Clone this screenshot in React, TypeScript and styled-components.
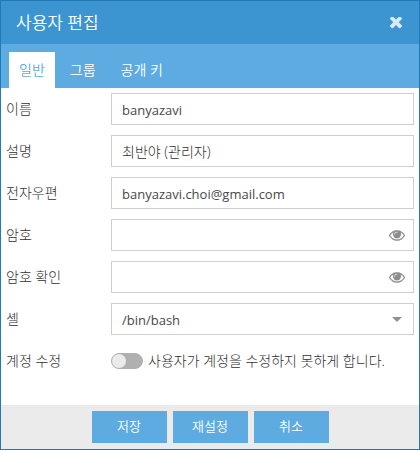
import React, { useState } from "react";
import styled, { createGlobalStyle } from "styled-components";

const GlobalStyle = createGlobalStyle`
  *, *::before, *::after { box-sizing: border-box; }
  body { margin: 0; background: #fff; }
  body, button, input, select {
    font-family: "Open Sans", "Noto Sans CJK KR", sans-serif;
    font-size: 14px;
  }
`;

const Dialog = styled.main`
  display: flex;
  flex-direction: column;
  min-height: 100vh;
  border: 1px solid #1e7ab8;
  background: #fff;
  color: #484848;
`;

const Header = styled.header`
  display: flex;
  align-items: center;
  justify-content: space-between;
  height: 43px;
  padding: 0 17px 0 15px;
  background: #3c95d0;
  color: #fff;
`;

const Title = styled.h1`
  margin: 0;
  font-size: 17px;
  font-weight: 350;
  line-height: 24px;
`;

const IconButton = styled.button`
  display: flex;
  padding: 0;
  border: 0;
  background: none;
  color: inherit;
  cursor: pointer;
`;

const CloseButton = styled(IconButton)`
  color: #d8eaf6;
`;

const Tabs = styled.div`
  display: flex;
  align-items: flex-end;
  gap: 5px;
  height: 44px;
  padding: 0 8px;
  background: #5dabe0;
`;

const Tab = styled.button<{ $active: boolean }>`
  height: 36px;
  padding: 0 10px;
  border: 0;
  background: ${(p) => (p.$active ? "#fff" : "transparent")};
  color: ${(p) => (p.$active ? "#5dabe0" : "#fff")};
  font-weight: 350;
  line-height: 20px;
  cursor: pointer;
`;

const Form = styled.form`
  display: flex;
  flex: 1;
  flex-direction: column;
`;

const Fields = styled.div`
  display: flex;
  flex: 1;
  flex-direction: column;
  gap: 10px;
  padding: 5px;
`;

const Row = styled.div`
  display: grid;
  grid-template-columns: 105px minmax(0, 1fr);
  align-items: center;
  height: 32px;
`;

const Label = styled.label`
  color: #303030;
  font-weight: 300;
  line-height: 20px;
`;

const Control = styled.div`
  display: flex;
  align-items: center;
  height: 32px;
  position: relative;
`;

const TextInput = styled.input<{ $icon?: boolean; $hangul?: boolean }>`
  width: 100%;
  height: 32px;
  padding: ${(p) => (p.$hangul ? "0" : "2px")} ${(p) => (p.$icon ? "32px" : "10px")} 0 10px;
  border: 1px solid #cfcfcf;
  border-radius: 0;
  background: #fff;
  color: ${(p) => (p.$hangul ? "#303030" : "#484848")};
  font-size: ${(p) => (p.$hangul ? "14px" : "13px")};
  font-weight: ${(p) => (p.$hangul ? 300 : 400)};
  outline: none;
`;

const Select = styled.select`
  width: 100%;
  height: 32px;
  padding: 2px 32px 0 10px;
  border: 1px solid #cfcfcf;
  border-radius: 0;
  appearance: none;
  background: #fff;
  color: #484848;
  font-size: 13px;
  outline: none;
`;

const RevealButton = styled(IconButton)`
  position: absolute;
  right: 9px;
  color: #8c8c8c;
`;

const Caret = styled.svg`
  position: absolute;
  right: 12px;
  color: #919191;
  pointer-events: none;
`;

const Switch = styled.input`
  appearance: none;
  display: flex;
  width: 32px;
  height: 16px;
  margin: 0 5px 0 0;
  border: 1px solid #b0b0b0;
  border-radius: 8px;
  background: #b0b0b0;
  cursor: pointer;

  &::before {
    content: "";
    width: 14px;
    height: 14px;
    border-radius: 50%;
    background: #ebebeb;
  }

  &:checked {
    justify-content: flex-end;
    border-color: #5dabe0;
    background: #5dabe0;
  }
`;

const Footer = styled.footer`
  display: flex;
  align-items: center;
  justify-content: center;
  gap: 6px;
  height: 44px;
  background: #ebebeb;
`;

const ActionButton = styled.button`
  width: 75px;
  height: 32px;
  padding: 0 0 4px;
  border: 0;
  background: #5dabe0;
  color: #fff;
  font-size: 13px;
  font-weight: 350;
  cursor: pointer;
`;

const CloseIcon = () => (
  <svg width="12" height="12" viewBox="302 434 1188 1188" fill="currentColor" aria-hidden="true">
    <path d="M1490 1322q0 40-28 68l-136 136q-28 28-68 28t-68-28l-294-294-294 294q-28 28-68 28t-68-28l-136-136q-28-28-28-68t28-68l294-294-294-294q-28-28-28-68t28-68l136-136q28-28 68-28t68 28l294 294 294-294q28-28 68-28t68 28l136 136q28 28 28 68t-28 68l-294 294 294 294q28 28 28 68z" />
  </svg>
);

const EyeIcon = () => (
  <svg
    width="16"
    height="11"
    viewBox="0 384 1792 1152"
    fill="currentColor"
    stroke="currentColor"
    strokeWidth="20"
    aria-hidden="true"
  >
    <path d="M1664 960q-152-236-381-353 61 104 61 225 0 185-131.5 316.5t-316.5 131.5-316.5-131.5-131.5-316.5q0-121 61-225-229 117-381 353 133 205 333.5 326.5t434.5 121.5 434.5-121.5 333.5-326.5zm-720-384q0-20-14-34t-34-14q-125 0-214.5 89.5t-89.5 214.5q0 20 14 34t34 14 34-14 14-34q0-86 61-147t147-61q20 0 34-14t14-34zm848 384q0 34-20 69-140 230-376.5 368.5t-499.5 138.5-499.5-139-376.5-368q-20-35-20-69t20-69q140-229 376.5-368t499.5-139 499.5 139 376.5 368q20 35 20 69z" />
  </svg>
);

function PasswordRow({ id, label }: { id: string; label: string }) {
  const [visible, setVisible] = useState(false);
  return (
    <Row>
      <Label htmlFor={id}>{label}</Label>
      <Control>
        <TextInput id={id} type={visible ? "text" : "password"} autoComplete="new-password" $icon />
        <RevealButton type="button" aria-label={label + " 표시"} onClick={() => setVisible(!visible)}>
          <EyeIcon />
        </RevealButton>
      </Control>
    </Row>
  );
}

type TextRowProps = { id: string; label: string; value: string; type?: string; hangul?: boolean };

function TextRow({ id, label, value, type = "text", hangul }: TextRowProps) {
  return (
    <Row>
      <Label htmlFor={id}>{label}</Label>
      <Control>
        <TextInput id={id} type={type} defaultValue={value} $hangul={hangul} />
      </Control>
    </Row>
  );
}

const TABS = ["일반", "그룹", "공개 키"];

export default function App() {
  const [tab, setTab] = useState(TABS[0]);
  return (
    <>
      <GlobalStyle />
      <Dialog>
        <Header>
          <Title>사용자 편집</Title>
          <CloseButton type="button" aria-label="닫기">
            <CloseIcon />
          </CloseButton>
        </Header>
        <Tabs role="tablist">
          {TABS.map((name) => (
            <Tab key={name} type="button" role="tab" aria-selected={tab === name} $active={tab === name} onClick={() => setTab(name)}>
              {name}
            </Tab>
          ))}
        </Tabs>
        <Form onSubmit={(e) => e.preventDefault()}>
          <Fields>
            <TextRow id="name" label="이름" value="banyazavi" />
            <TextRow id="comment" label="설명" value="최반야 (관리자)" hangul />
            <TextRow id="email" label="전자우편" value="banyazavi.choi@gmail.com" type="email" />
            <PasswordRow id="password" label="암호" />
            <PasswordRow id="confirm" label="암호 확인" />
            <Row>
              <Label htmlFor="shell">셸</Label>
              <Control>
                <Select id="shell" defaultValue="/bin/bash">
                  <option>/bin/bash</option>
                </Select>
                <Caret width="10" height="5" viewBox="0 0 10 5" fill="currentColor" aria-hidden="true">
                  <path d="M0 0h10L5 5z" />
                </Caret>
              </Control>
            </Row>
            <Row>
              <Label as="span">계정 수정</Label>
              <Control>
                <Switch id="lock" type="checkbox" role="switch" />
                <Label htmlFor="lock">사용자가 계정을 수정하지 못하게 합니다.</Label>
              </Control>
            </Row>
          </Fields>
          <Footer>
            <ActionButton type="submit">저장</ActionButton>
            <ActionButton type="reset">재설정</ActionButton>
            <ActionButton type="button">취소</ActionButton>
          </Footer>
        </Form>
      </Dialog>
    </>
  );
}
